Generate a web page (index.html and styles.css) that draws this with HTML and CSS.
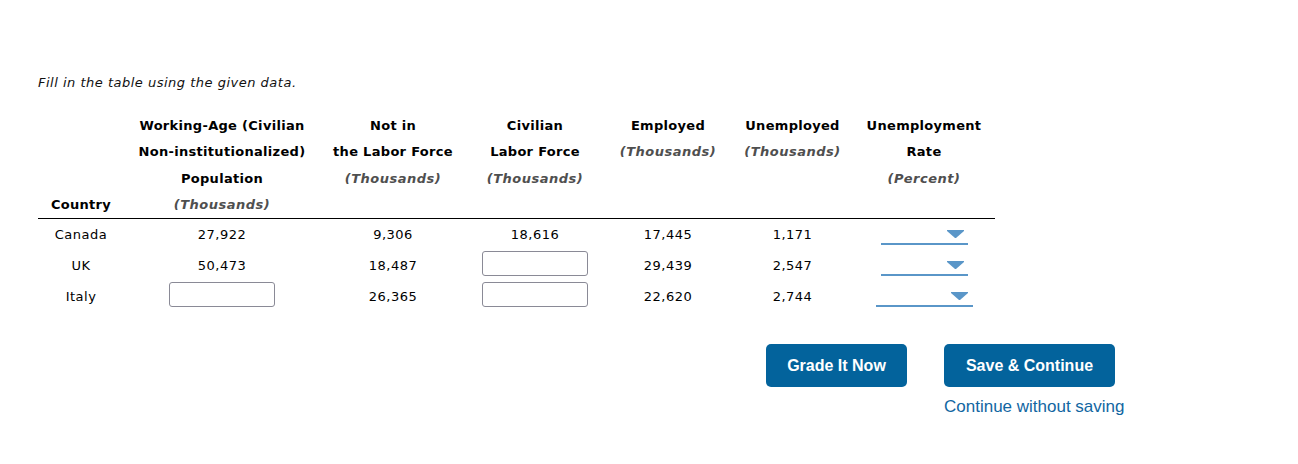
FILE: index.html
```html
<!DOCTYPE html>
<html lang="en">
<head>
<meta charset="utf-8">
<title>Fill in the table</title>
<link rel="stylesheet" href="styles.css">
</head>
<body>
<div class="page">
  <p class="instructions">Fill in the table using the given data.</p>
  <table class="data-table">
    <thead>
      <tr>
        <th class="c-country">Country</th>
        <th class="c-wap">Working-Age (Civilian<br>Non-institutionalized)<br>Population<br><span class="unit">(Thousands)</span></th>
        <th class="c-nilf">Not in<br>the Labor Force<br><span class="unit">(Thousands)</span><br>&nbsp;</th>
        <th class="c-clf">Civilian<br>Labor Force<br><span class="unit">(Thousands)</span><br>&nbsp;</th>
        <th class="c-emp">Employed<br><span class="unit">(Thousands)</span><br>&nbsp;<br>&nbsp;</th>
        <th class="c-unemp">Unemployed<br><span class="unit">(Thousands)</span><br>&nbsp;<br>&nbsp;</th>
        <th class="c-rate">Unemployment<br>Rate<br><span class="unit">(Percent)</span><br>&nbsp;</th>
      </tr>
    </thead>
    <tbody>
      <tr>
        <td>Canada</td>
        <td>27,922</td>
        <td>9,306</td>
        <td>18,616</td>
        <td>17,445</td>
        <td>1,171</td>
        <td><span class="dropdown"><svg class="caret" width="17" height="8" viewBox="0 0 17 8"><polygon points="0,0 17,0 17,1 9,8 8,8 0,1"/></svg></span></td>
      </tr>
      <tr>
        <td>UK</td>
        <td>50,473</td>
        <td>18,487</td>
        <td><input class="field" type="text"></td>
        <td>29,439</td>
        <td>2,547</td>
        <td><span class="dropdown"><svg class="caret" width="17" height="8" viewBox="0 0 17 8"><polygon points="0,0 17,0 17,1 9,8 8,8 0,1"/></svg></span></td>
      </tr>
      <tr>
        <td>Italy</td>
        <td><input class="field" type="text"></td>
        <td>26,365</td>
        <td><input class="field" type="text"></td>
        <td>22,620</td>
        <td>2,744</td>
        <td><span class="dropdown dropdown-wide"><svg class="caret" width="17" height="8" viewBox="0 0 17 8"><polygon points="0,0 17,0 17,1 9,8 8,8 0,1"/></svg></span></td>
      </tr>
    </tbody>
  </table>
  <div class="actions">
    <button class="btn btn-grade" type="button">Grade It Now</button>
    <div class="save-group">
      <button class="btn btn-save" type="button">Save &amp; Continue</button>
      <a class="skip-link" href="#">Continue without saving</a>
    </div>
  </div>
</div>
</body>
</html>
```

FILE: styles.css
```css
html, body {
  margin: 0;
  padding: 0;
  background: #ffffff;
}

body {
  font-family: "DejaVu Sans", Verdana, sans-serif;
  font-size: 13px;
  letter-spacing: 0.5px;
  color: #000000;
}

.page {
  padding: 75px 0 0 38px;
}

.instructions {
  margin: 0;
  font-style: italic;
  line-height: 16px;
  color: #111111;
}

.data-table {
  margin-top: 22px;
  border-collapse: collapse;
  table-layout: fixed;
  width: 957px;
}

.data-table th {
  font-weight: bold;
  letter-spacing: 0.3px;
  line-height: 26.25px;
  padding: 0;
  text-align: center;
  vertical-align: bottom;
  border-bottom: 1px solid #000000;
  white-space: nowrap;
}

.unit {
  font-style: italic;
  letter-spacing: 0.5px;
  color: #4f4f4f;
}

.c-country { width: 86px; }
.c-wap { width: 196px; }
.c-nilf { width: 146px; }
.c-clf { width: 138px; }
.c-emp { width: 128px; }
.c-unemp { width: 121px; }
.c-rate { width: 142px; }

.data-table td {
  height: 31px;
  padding: 0;
  text-align: center;
  vertical-align: middle;
  line-height: 16px;
}

.field {
  box-sizing: border-box;
  width: 106px;
  height: 25px;
  margin: 0 0 4px 0;
  padding: 2px 4px;
  border: 1px solid #8a8a96;
  border-radius: 3px;
  background: #ffffff;
  font-family: inherit;
  font-size: 13px;
  vertical-align: middle;
}

.dropdown {
  box-sizing: border-box;
  display: inline-flex;
  justify-content: flex-end;
  align-items: flex-end;
  width: 87px;
  height: 21px;
  padding: 0 4px 5px 0;
  border-bottom: 2px solid #5a96c8;
  vertical-align: middle;
}

.dropdown-wide {
  width: 97px;
  padding-right: 5px;
}

.caret {
  display: block;
  fill: #5a96c8;
}

.actions {
  display: flex;
  align-items: flex-start;
  gap: 37px;
  margin: 32px 0 0 728px;
}

.save-group {
  display: flex;
  flex-direction: column;
  align-items: flex-start;
}

.btn {
  height: 43px;
  padding: 0;
  border: none;
  border-radius: 5px;
  background: #03639c;
  color: #ffffff;
  font-family: "Liberation Sans", Arial, sans-serif;
  font-size: 16px;
  font-weight: bold;
  letter-spacing: 0;
  text-align: center;
  cursor: pointer;
}

.btn-grade { width: 141px; }
.btn-save { width: 171px; }

.skip-link {
  margin-top: 10px;
  font-family: "Liberation Sans", Arial, sans-serif;
  font-size: 17px;
  line-height: 19px;
  letter-spacing: 0;
  color: #1166a2;
  text-decoration: none;
}
```
